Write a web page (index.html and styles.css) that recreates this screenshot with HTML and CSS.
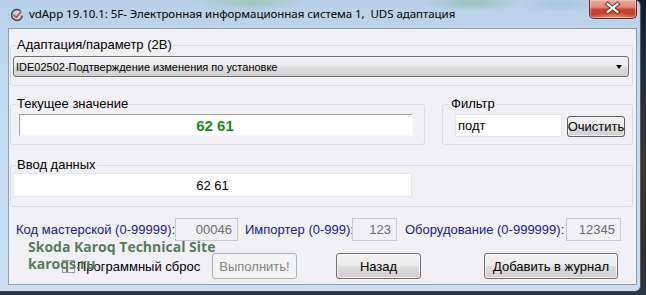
FILE: index.html
```html
<!DOCTYPE html>
<html lang="ru">
<head>
<meta charset="utf-8">
<title>vdApp</title>
<link rel="stylesheet" href="styles.css">
</head>
<body>
<div class="window">
  <div class="titlebar">
    <svg class="app-icon" width="14" height="14" viewBox="0 0 14 14">
      <path d="M10.8 3.2 A5.4 5.4 0 1 0 12.3 7.6" fill="none" stroke="#474747" stroke-width="1.5"/>
      <path d="M3.8 7.2 L6.2 9.4 L10.6 4.2" fill="none" stroke="#e2471f" stroke-width="1.7" stroke-linecap="round" stroke-linejoin="round"/>
    </svg>
    <span class="title">vdApp 19.10.1: 5F- Электронная информационная система 1,  UDS адаптация</span>
    <div class="close">
      <svg width="48" height="19" viewBox="0 0 48 19">
        <path d="M19 5 L29 13 M29 5 L19 13" stroke="#5b2a22" stroke-width="4.2" stroke-linecap="square"/>
        <path d="M19 5 L29 13 M29 5 L19 13" stroke="#ffffff" stroke-width="2.4" stroke-linecap="square"/>
      </svg>
    </div>
  </div>
  <div class="client">
    <fieldset class="group g-param">
      <legend>Адаптация/параметр (2В)</legend>
      <div class="body">
        <div class="combo"><span class="combo-text">IDE02502-Подтверждение изменения по установке</span><span class="arrow"></span></div>
      </div>
    </fieldset>
    <div class="row2">
      <fieldset class="group g-current">
        <legend>Текущее значение</legend>
        <div class="body">
          <div class="field sunken value">62 61</div>
        </div>
      </fieldset>
      <fieldset class="group g-filter">
        <legend class="legend-filter">Фильтр</legend>
        <div class="body">
          <div class="field flat filter">подт</div>
          <div class="btn clear">Очистить</div>
        </div>
      </fieldset>
    </div>
    <fieldset class="group g-input">
      <legend>Ввод данных</legend>
      <div class="body">
        <div class="field flat data">62 61</div>
      </div>
    </fieldset>
    <div class="codes">
      <span class="code-label l1">Код мастерской (0-99999):</span>
      <div class="code-field w1">00046</div>
      <span class="code-label l2">Импортер (0-999):</span>
      <div class="code-field w2">123</div>
      <span class="code-label l3">Оборудование (0-999999):</span>
      <div class="code-field w3">12345</div>
    </div>
    <div class="actions">
      <div class="check-wrap">
        <span class="checkbox"></span>
        <span class="check-label">Программный сброс</span>
      </div>
      <div class="btn disabled run">Выполнить!</div>
      <div class="btn back">Назад</div>
      <div class="btn journal">Добавить в журнал</div>
    </div>
    <div class="watermark">Skoda Karoq Technical Site<br>karoqs.ru</div>
  </div>
</div>
</body>
</html>
```

FILE: styles.css
```css
* { box-sizing: border-box; }
html, body { margin: 0; padding: 0; }
body {
  width: 646px;
  height: 295px;
  overflow: hidden;
  background: linear-gradient(180deg, #141d2b 0%, #222c3a 25%, #4a3323 55%, #3c2b20 85%, #2a3646 100%);
  font-family: "Liberation Sans", Arial, sans-serif;
  color: #000;
}
.window {
  width: 641px;
  height: 292px;
  padding: 0 3px 0 8px;
  background:
    radial-gradient(ellipse 60px 10px at 250px 2px, rgba(140, 190, 150, 0.55), transparent),
    radial-gradient(ellipse 50px 8px at 470px 3px, rgba(120, 180, 140, 0.5), transparent),
    radial-gradient(ellipse 40px 8px at 560px 4px, rgba(150, 190, 210, 0.6), transparent),
    linear-gradient(180deg, #b8d0e9 0%, #c6daef 30%, #cddff1 100%);
  border-right: 1px solid #4a5a6c;
  border-bottom: 1px solid #3a4656;
  border-radius: 0 6px 6px 0;
  display: flex;
  flex-direction: column;
}
.titlebar {
  height: 28px;
  display: flex;
  align-items: flex-start;
  flex-shrink: 0;
}
.app-icon {
  margin: 8px 0 0 2px;
  flex-shrink: 0;
}
.title {
  margin: 6px 0 0 5px;
  font-family: "Noto Sans", "Open Sans", sans-serif;
  font-size: 11.5px;
  line-height: 16px;
  white-space: pre;
  color: #000;
  letter-spacing: -0.05px;
}
.close {
  margin-left: auto;
  width: 48px;
  height: 19px;
  border: 1px solid #6e2a1f;
  border-top: none;
  border-radius: 0 0 5px 5px;
  background:
    radial-gradient(ellipse 22px 6px at 24px 18px, rgba(255, 170, 120, 0.7), transparent),
    linear-gradient(180deg, #e9ab9e 0%, #dd8a77 40%, #c7452d 52%, #c4412a 80%, #d46a4e 100%);
  box-shadow: inset 0 0 0 1px rgba(255, 220, 210, 0.45);
  display: flex;
  align-items: center;
  justify-content: center;
}
.close svg { display: block; margin-left: -1px; margin-top: -1px; }

.client {
  position: relative;
  height: 257px;
  background: #f0f0f5;
  border: 1px solid #8e9eb3;
  display: flex;
  flex-direction: column;
  flex-shrink: 0;
}

.group {
  margin: 0;
  padding: 0;
  min-width: 0;
  border: 1px solid #d5dfe5;
  border-radius: 3px;
}
.group legend {
  padding: 0 1px;
  margin-left: 5px;
  font-size: 13px;
  line-height: 16px;
}
.group legend.legend-filter { margin-left: 7px; }

.g-param { margin: 8px 3px 0 1px; }
.g-param .body { padding: 3px 3px 8px 2px; }

.combo {
  height: 21px;
  border: 1px solid #707070;
  border-radius: 3px;
  background: linear-gradient(180deg, #f3f3f3 0%, #ebebeb 48%, #dedede 52%, #d1d1d1 100%);
  display: flex;
  align-items: center;
  padding: 0 6px 0 2px;
}
.combo-text {
  font-size: 11px;
  line-height: 14px;
  flex: 1;
}
.arrow {
  width: 0;
  height: 0;
  border-left: 3.5px solid transparent;
  border-right: 3.5px solid transparent;
  border-top: 4px solid #000;
}

.row2 {
  display: flex;
  gap: 17px;
  margin: 10px 0 0 1px;
}
.g-current { width: 415px; }
.g-current .body { padding: 2px 11px 8px 8px; }
.g-filter { width: 191px; }
.g-filter .body {
  display: flex;
  align-items: flex-start;
  gap: 5px;
  padding: 2px 7px 7px 12px;
}

.field {
  background: #fff;
  font-size: 13px;
  display: flex;
  align-items: center;
}
.sunken {
  height: 22px;
  border-top: 1px solid #a3a3a3;
  border-left: 1px solid #a3a3a3;
  border-right: 1px solid #f7f7f7;
  border-bottom: 1px solid #f7f7f7;
}
.flat { border: 1px solid #e6e6ea; }
.value {
  justify-content: center;
  font-size: 15px;
  font-weight: bold;
  color: #1a8a1a;
  padding-right: 2px;
}
.filter {
  width: 107px;
  height: 23px;
  padding-left: 2px;
}
.g-input { margin: 12px 3px 0 1px; }
.g-input .body { padding: 0 0 9px 2px; }
.data {
  width: 399px;
  height: 24px;
  justify-content: center;
}

.btn {
  height: 26px;
  border: 1px solid #707070;
  border-radius: 3px;
  background: linear-gradient(180deg, #f3f3f3 0%, #ebebeb 48%, #dddddd 52%, #cfcfcf 100%);
  box-shadow: inset 0 0 0 1px rgba(255, 255, 255, 0.7);
  font-size: 13px;
  display: flex;
  align-items: center;
  justify-content: center;
  white-space: nowrap;
}
.btn.clear {
  width: 58px;
  height: 21px;
  margin-top: 2px;
  border-color: #5f5f5f;
}
.btn.disabled {
  border-color: #adb2b5;
  background: #f4f4f4;
  box-shadow: none;
  color: #838383;
}

.codes {
  height: 23px;
  margin-top: 11px;
  display: flex;
  align-items: center;
  padding-left: 7px;
}
.code-label {
  font-size: 13px;
  color: #20208a;
  white-space: nowrap;
}
.l1 { width: 159px; }
.l2 { width: 107px; margin-left: 7px; }
.l3 { width: 161px; margin-left: 8px; }
.code-field {
  height: 23px;
  border: 1px solid #c9c9ce;
  font-size: 13px;
  color: #6d6d6d;
  display: flex;
  align-items: center;
  justify-content: flex-end;
  padding-right: 5px;
}
.w1 { width: 63px; }
.w2 { width: 45px; }
.w3 { width: 55px; }

.actions {
  height: 26px;
  margin-top: 12px;
  display: flex;
  align-items: center;
  padding-left: 53px;
}
.check-wrap {
  width: 150px;
  display: flex;
  align-items: center;
  gap: 2px;
}
.checkbox {
  width: 13px;
  height: 13px;
  border: 1px solid #9a9a9a;
  background: linear-gradient(135deg, #dcdcdc 0%, #f6f6f6 100%);
  box-shadow: inset 0 0 0 1px #f4f4f4;
  flex-shrink: 0;
}
.check-label {
  font-size: 13px;
  white-space: nowrap;
}
.run { width: 85px; }
.back { width: 85px; margin-left: 39px; }
.journal { width: 134px; margin-left: 63px; }

.watermark {
  position: absolute;
  left: 19px;
  top: 209px;
  font-family: "Open Sans", "Noto Sans", sans-serif;
  font-weight: 700;
  font-size: 14px;
  line-height: 17px;
  color: rgba(64, 104, 74, 0.9);
  text-shadow: 0 0 1px rgba(255, 255, 255, 0.7);
  white-space: nowrap;
}
```
